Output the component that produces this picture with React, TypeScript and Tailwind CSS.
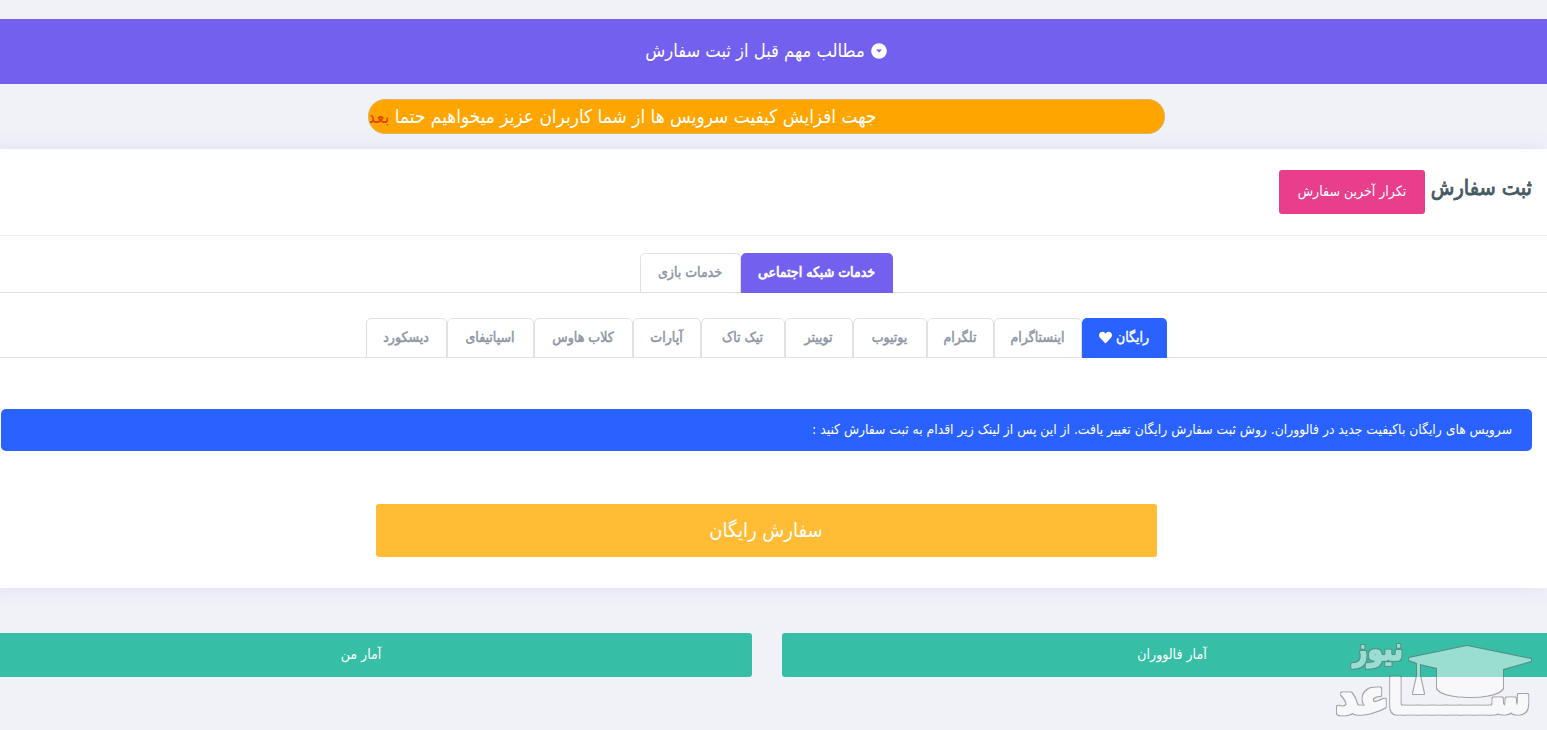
import { clsx } from 'clsx'
import { FaHeart } from 'react-icons/fa'

const categories = [
  { label: 'خدمات شبکه اجتماعی', width: 'w-[152px]', active: true },
  { label: 'خدمات بازی', width: 'w-[101px]' },
]

const networks = [
  { label: 'رایگان', width: 'w-[85px]', active: true },
  { label: 'اینستاگرام', width: 'w-[88px]' },
  { label: 'تلگرام', width: 'w-[67px]' },
  { label: 'یوتیوب', width: 'w-[74px]' },
  { label: 'توییتر', width: 'w-[68px]' },
  { label: 'تیک تاک', width: 'w-[84px]' },
  { label: 'آپارات', width: 'w-[68px]' },
  { label: 'کلاب هاوس', width: 'w-[99px]' },
  { label: 'اسپاتیفای', width: 'w-[87px]' },
  { label: 'دیسکورد', width: 'w-[81px]' },
]

const tabBase = 'flex h-10 shrink-0 items-center justify-center whitespace-nowrap rounded-t-[5px] pb-0.5 text-[14px]'
const tabIdle = 'border border-[#dee2e6] bg-white text-[#8d97a5] [-webkit-text-stroke:0.5px]'

function Notice() {
  return (
    <div className="mx-auto mt-[15px] flex h-[35px] w-[797px] items-center overflow-hidden rounded-[17px] border border-[#dfb564] bg-[#ffa500] pb-0.5">
      <p className="mr-[287px] whitespace-nowrap text-[18.9px] leading-7 text-white">
        جهت افزایش کیفیت سرویس ها از شما کاربران عزیز میخواهیم حتما <span className="text-[#e0400a]">بعد</span>
      </p>
    </div>
  )
}

function OrderCard() {
  return (
    <section className="mt-[15px] h-[439px] bg-white shadow-[0_0_20px_rgba(100,90,190,0.12)]">
      <header className="flex h-[87px] items-start gap-1 border-b border-[#f0f1f4] px-[15px] pt-[21px]">
        <h4 className="w-[103px] whitespace-nowrap pt-0.5 text-[21.5px] leading-8 text-[#455a64] [-webkit-text-stroke:0.8px]">
          ثبت سفارش
        </h4>
        <button className="h-11 w-[146px] whitespace-nowrap rounded-[3px] bg-[#e83e8c] pb-0.5 text-[14px] text-white">
          تکرار آخرین سفارش
        </button>
      </header>
      <nav className="mt-[17px] flex h-10 justify-center border-b border-[#dee2e6]">
        {categories.map((c) => (
          <button
            key={c.label}
            className={clsx(tabBase, c.width, c.active ? 'bg-[#7460ee] text-white [-webkit-text-stroke:0.7px]' : tabIdle)}
          >
            {c.label}
          </button>
        ))}
      </nav>
      <nav className="mt-[25px] flex h-10 justify-center border-b border-[#dee2e6]">
        {networks.map((n) => (
          <button
            key={n.label}
            className={clsx(tabBase, n.width, n.active ? 'gap-1 bg-[#2962ff] text-white [-webkit-text-stroke:0.4px]' : tabIdle)}
          >
            {n.label}
            {n.active && <FaHeart className="h-[13px] w-[13px]" />}
          </button>
        ))}
      </nav>
      <div className="mr-[15px] ml-4 mt-[51px] flex h-[42px] items-center whitespace-nowrap rounded-[5px] bg-[#2962ff] px-5 pb-0.5 text-[13.75px] text-white">
        <p>سرویس های رایگان باکیفیت جدید در فالووران. روش ثبت سفارش رایگان تغییر یافت. از این پس از لینک زیر اقدام به ثبت سفارش کنید :</p>
      </div>
      <button className="mx-auto mt-[53px] block h-[53px] w-[781px] rounded-[3px] bg-[#ffbc34] pb-0.5 text-[20px] text-white">
        سفارش رایگان
      </button>
    </section>
  )
}

function Watermark() {
  return (
    <svg
      className="absolute left-[1325px] top-[630px]"
      width="215"
      height="95"
      viewBox="0 0 215 95"
      fill="#fff"
      direction="rtl"
      fontWeight="bold"
    >
      <filter id="outline" x="0" y="0" width="215" height="95" filterUnits="userSpaceOnUse">
        <feMorphology in="SourceAlpha" operator="dilate" radius="1" result="grown" />
        <feFlood floodColor="#707070" floodOpacity="0.6" />
        <feComposite in2="grown" operator="in" />
        <feComposite in2="SourceAlpha" operator="out" result="edge" />
        <feComponentTransfer in="SourceGraphic" result="body">
          <feFuncA type="linear" slope="0.5" />
        </feComponentTransfer>
        <feMerge>
          <feMergeNode in="body" />
          <feMergeNode in="edge" />
        </feMerge>
      </filter>
      <g filter="url(#outline)">
        <path d="M84 28 142 16 206 29V31L178 39V58C172 70 118 70 112 58V38L95 34V46L99 64H88L92 46V33L84 30Z" />
        <g stroke="#fff" strokeLinejoin="round">
          <text x="78" y="30" fontSize="32" strokeWidth="1.5" textLength="50" lengthAdjust="spacingAndGlyphs">نیوز</text>
          <text x="205" y="83" fontSize="46" strokeWidth="3" textLength="194" lengthAdjust="spacingAndGlyphs">ســــــاعد</text>
        </g>
      </g>
    </svg>
  )
}

export default function App() {
  return (
    <div
      dir="rtl"
      className="relative h-[730px] w-[1547px] overflow-hidden bg-[#f1f2f8] font-['DejaVu_Sans_Condensed','DejaVu_Sans',sans-serif]"
    >
      <main className="-mr-[15px] w-[1577px] pt-[19px]">
        <div className="mr-[15px] w-[1562px]">
          <div className="flex h-[65px] items-center justify-center gap-1.5 bg-[#7460ee] pb-0.5 text-[18.2px] text-white">
            <svg width="16" height="16" viewBox="0 0 16 16">
              <circle cx="8" cy="8" r="7.8" fill="#fff" />
              <path d="M5 6.5h6L8 9.5Z" fill="#7460ee" />
            </svg>
            <span className="whitespace-nowrap">مطالب مهم قبل از ثبت سفارش</span>
          </div>
          <Notice />
          <OrderCard />
        </div>
        <div className="mt-[45px] flex gap-[30px]">
          <button className="h-11 w-[780px] shrink-0 rounded-[3px] bg-[#36bea6] pb-0.5 text-[14px] text-white">آمار فالووران</button>
          <button className="h-11 w-[782px] shrink-0 rounded-[3px] bg-[#36bea6] pb-0.5 text-[14px] text-white">آمار من</button>
        </div>
      </main>
      <Watermark />
    </div>
  )
}
